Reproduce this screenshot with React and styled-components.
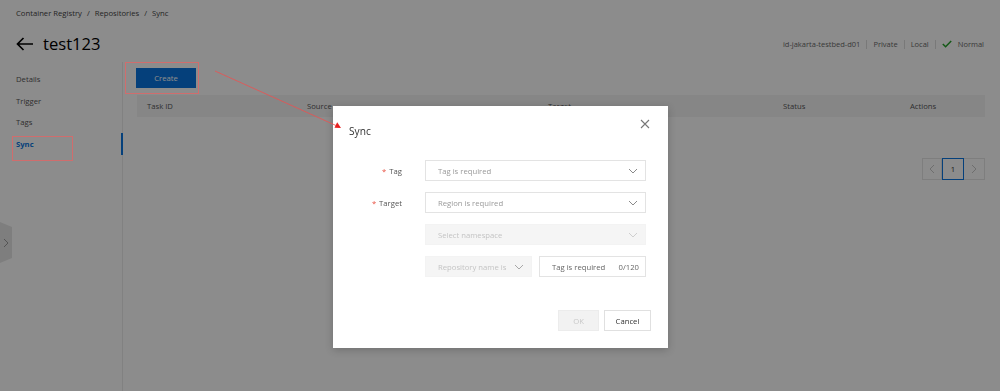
import React from "react";
import styled, { createGlobalStyle } from "styled-components";

const GlobalStyle = createGlobalStyle`
  html, body {
    margin: 0;
    padding: 0;
    background: #fff;
    overflow: hidden;
  }
  body {
    font-family: "Open Sans", "Liberation Sans", sans-serif;
    color: #333;
  }
  * { box-sizing: border-box; }
`;

const BLUE = "#0a76e0";

const Page = styled.div`
  position: relative;
  width: 1000px;
  height: 391px;
  overflow: hidden;
`;

const Header = styled.div`
  height: 62px;
  padding: 8px 16px 0 16px;
`;

const Breadcrumb = styled.div`
  display: flex;
  align-items: center;
  gap: 5px;
  font-size: 7.7px;
  line-height: 11px;
  color: #444;
`;

const TitleRow = styled.div`
  display: flex;
  align-items: center;
  justify-content: space-between;
  height: 24px;
  margin-top: 13px;
`;

const TitleLeft = styled.div`
  display: flex;
  align-items: center;
  gap: 9px;
`;

const Title = styled.h1`
  margin: 0;
  font-size: 16.6px;
  font-weight: 400;
  color: #000;
  line-height: 24px;
`;

const Meta = styled.div`
  display: flex;
  align-items: center;
  font-size: 7.5px;
  color: #6a6a6a;
`;

const MetaSep = styled.span`
  width: 1px;
  height: 9px;
  background: #ddd;
  margin: 0 6px;
`;

const StatusText = styled.span`
  display: flex;
  align-items: center;
  gap: 6px;
`;

const Body = styled.div`
  display: flex;
  height: 329px;
`;

const Sidebar = styled.nav`
  width: 123px;
  flex-shrink: 0;
  border-right: 1px solid #ececec;
  padding-top: 6px;
`;

const NavItem = styled.div`
  height: 21.7px;
  display: flex;
  align-items: center;
  padding-left: 16px;
  margin-right: -1px;
  font-size: 7.7px;
  color: ${(p) => (p.active ? BLUE : "#555")};
  font-weight: ${(p) => (p.active ? 700 : 400)};
  border-right: 2px solid ${(p) => (p.active ? BLUE : "transparent")};
`;

const Main = styled.div`
  flex: 1;
  padding: 6px 15px 0 14px;
`;

const CreateButton = styled.button`
  display: block;
  width: 60px;
  height: 20px;
  border: none;
  background: ${BLUE};
  color: #fff;
  font-family: inherit;
  font-size: 7.7px;
  padding: 0;
  margin-left: -1px;
`;

const HeadRow = styled.div`
  margin-top: 7px;
  height: 22px;
  display: grid;
  grid-template-columns: 160px 241px 235px 127px 1fr;
  align-items: center;
  background: #f5f5f5;
  font-size: 7.7px;
  color: #555;
`;

const HeadCell = styled.div`
  padding-left: 10px;
`;

const Pagination = styled.div`
  display: flex;
  justify-content: flex-end;
  margin-top: 41px;
`;

const PageBox = styled.div`
  width: ${(p) => (p.wide ? 22 : 20)}px;
  height: 22px;
  display: flex;
  align-items: center;
  justify-content: center;
  border: 1px solid ${(p) => (p.current ? BLUE : "#e6e6e6")};
  margin-left: ${(p) => (p.current ? "0" : "-1px")};
  position: relative;
  z-index: ${(p) => (p.current ? 1 : 0)};
  font-size: 7.7px;
  color: #333;
  background: #fff;
`;

const CollapseTab = styled.div`
  position: absolute;
  left: 0;
  top: 222px;
  width: 12px;
  height: 41px;
  background: #e6e6e6;
  clip-path: polygon(0 0, 100% 12%, 100% 88%, 0 100%);
  display: flex;
  align-items: center;
  justify-content: center;
`;

const Mask = styled.div`
  position: fixed;
  inset: 0;
  background: rgba(0, 0, 0, 0.45);
  z-index: 10;
`;

const Modal = styled.div`
  position: absolute;
  left: 333px;
  top: 106px;
  width: 335px;
  height: 242px;
  background: #fff;
  box-shadow: 0 2px 8px rgba(0, 0, 0, 0.2);
  z-index: 20;
  display: flex;
  flex-direction: column;
`;

const ModalHeader = styled.div`
  height: 50px;
  display: flex;
  align-items: center;
  justify-content: space-between;
  padding: 0 18px 0 16px;
`;

const ModalTitle = styled.div`
  font-size: 10.2px;
  color: #333;
`;

const CloseBtn = styled.div`
  display: flex;
  margin-top: -14px;
`;

const Form = styled.div`
  display: grid;
  grid-template-columns: 53px 221px;
  column-gap: 23px;
  row-gap: 11px;
  padding: 4px 22px 0 16px;
`;

const Label = styled.div`
  height: 21px;
  display: flex;
  align-items: center;
  justify-content: flex-end;
  font-size: 7.7px;
  color: #555;
`;

const Required = styled.span`
  color: #e84c3d;
  margin-right: 3px;
`;

const Select = styled.div`
  height: 21px;
  display: flex;
  align-items: center;
  justify-content: space-between;
  padding: 0 5px 0 12px;
  border: 1px solid ${(p) => (p.disabled ? "#f3f3f3" : "#e3e3e3")};
  background: ${(p) => (p.disabled ? "#f5f5f5" : "#fff")};
  font-size: 7.7px;
  color: ${(p) => (p.disabled ? "#c4c4c4" : "#999")};
  overflow: hidden;
`;

const SelectText = styled.span`
  white-space: nowrap;
  overflow: hidden;
  flex: 1;
`;

const Chevron = styled.span`
  display: flex;
  width: 14px;
  justify-content: center;
  flex-shrink: 0;
  margin-left: 4px;
`;

const Split = styled.div`
  display: grid;
  grid-template-columns: 107px 107px;
  column-gap: 7px;
`;

const TextInput = styled.div`
  height: 21px;
  display: flex;
  align-items: center;
  justify-content: space-between;
  padding: 0 6px 0 12px;
  border: 1px solid #e3e3e3;
  font-size: 7.7px;
  color: #666;
`;

const Footer = styled.div`
  display: flex;
  justify-content: flex-end;
  gap: 5px;
  padding: 0 17px 0 0;
  margin-top: 33px;
`;

const Button = styled.button`
  height: 21px;
  width: ${(p) => p.w}px;
  padding: 0;
  font-family: inherit;
  font-size: 7.7px;
  border: 1px solid ${(p) => (p.disabled ? "#ececec" : "#e0e0e0")};
  background: ${(p) => (p.disabled ? "#f2f2f2" : "#fff")};
  color: ${(p) => (p.disabled ? "#c8c8c8" : "#333")};
`;

const Note = styled.div`
  position: absolute;
  left: ${(p) => p.x}px;
  top: ${(p) => p.y}px;
  width: ${(p) => p.w}px;
  height: ${(p) => p.h}px;
  border: 1px solid rgba(236, 96, 96, 0.7);
  z-index: 30;
  pointer-events: none;
`;

const NoteLayer = styled.svg`
  position: absolute;
  left: 0;
  top: 0;
  z-index: 30;
  pointer-events: none;
`;

const ChevronDown = ({ color = "#8a8a8a" }) => (
  <svg width="10" height="6" viewBox="0 0 10 6">
    <path d="M1 1 L5 5 L9 1" fill="none" stroke={color} strokeWidth="1" />
  </svg>
);

const Arrow = ({ dir, color }) => (
  <svg width="6" height="10" viewBox="0 0 6 10">
    <path
      d={dir === "left" ? "M5 1 L1 5 L5 9" : "M1 1 L5 5 L1 9"}
      fill="none"
      stroke={color}
      strokeWidth="1"
    />
  </svg>
);

const columns = ["Task ID", "Source", "Target", "Status", "Actions"];
const nav = ["Details", "Trigger", "Tags", "Sync"];

export default function App() {
  return (
    <>
      <GlobalStyle />
      <Page>
        <Header>
          <Breadcrumb>
            <span>Container Registry</span>
            <span>/</span>
            <span>Repositories</span>
            <span>/</span>
            <span>Sync</span>
          </Breadcrumb>
          <TitleRow>
            <TitleLeft>
              <svg width="18" height="14" viewBox="0 0 18 14">
                <path d="M17 7 H1.5 M7.5 1 L1.5 7 L7.5 13" fill="none" stroke="#000" strokeWidth="1.7" />
              </svg>
              <Title>test123</Title>
            </TitleLeft>
            <Meta>
              <span>id-jakarta-testbed-d01</span>
              <MetaSep />
              <span>Private</span>
              <MetaSep />
              <span>Local</span>
              <MetaSep />
              <StatusText>
                <svg width="10" height="8" viewBox="0 0 10 8">
                  <path d="M0.8 4 L3.6 6.8 L9.2 1" fill="none" stroke="#25a32a" strokeWidth="1.5" />
                </svg>
                Normal
              </StatusText>
            </Meta>
          </TitleRow>
        </Header>
        <Body>
          <Sidebar>
            {nav.map((n) => (
              <NavItem key={n} active={n === "Sync"}>
                {n}
              </NavItem>
            ))}
          </Sidebar>
          <Main>
            <CreateButton>Create</CreateButton>
            <HeadRow>
              {columns.map((c) => (
                <HeadCell key={c}>{c}</HeadCell>
              ))}
            </HeadRow>
            <Pagination>
              <PageBox>
                <Arrow dir="left" color="#c8c8c8" />
              </PageBox>
              <PageBox current wide>1</PageBox>
              <PageBox wide>
                <Arrow dir="right" color="#c8c8c8" />
              </PageBox>
            </Pagination>
          </Main>
        </Body>
        <CollapseTab>
          <Arrow dir="right" color="#9a9a9a" />
        </CollapseTab>
      </Page>
      <Mask />
      <Modal>
        <ModalHeader>
          <ModalTitle>Sync</ModalTitle>
          <CloseBtn>
            <svg width="10" height="10" viewBox="0 0 10 10">
              <path d="M1 1 L9 9 M9 1 L1 9" fill="none" stroke="#777" strokeWidth="1.1" />
            </svg>
          </CloseBtn>
        </ModalHeader>
        <Form>
          <Label>
            <Required>*</Required>Tag
          </Label>
          <Select>
            <SelectText>Tag is required</SelectText>
            <Chevron>
              <ChevronDown />
            </Chevron>
          </Select>
          <Label>
            <Required>*</Required>Target
          </Label>
          <Select>
            <SelectText>Region is required</SelectText>
            <Chevron>
              <ChevronDown />
            </Chevron>
          </Select>
          <div />
          <Select disabled>
            <SelectText>Select namespace</SelectText>
            <Chevron>
              <ChevronDown color="#cfcfcf" />
            </Chevron>
          </Select>
          <div />
          <Split>
            <Select disabled>
              <SelectText>Repository name is required</SelectText>
              <Chevron>
                <ChevronDown color="#a8a8a8" />
              </Chevron>
            </Select>
            <TextInput>
              <span>Tag is required</span>
              <span>0/120</span>
            </TextInput>
          </Split>
        </Form>
        <Footer>
          <Button disabled w={41}>
            OK
          </Button>
          <Button w={47}>Cancel</Button>
        </Footer>
      </Modal>
      <Note x={125} y={62} w={74} h={32} />
      <Note x={12} y={136} w={61} h={25} />
      <NoteLayer width="1000" height="391" viewBox="0 0 1000 391">
        <line x1="215" y1="71" x2="336" y2="125.5" stroke="rgba(236, 80, 80, 0.8)" strokeWidth="1" />
        <path d="M341 128 L334.5 127.8 L337.2 122.3 Z" fill="#e82020" />
      </NoteLayer>
    </>
  );
}
